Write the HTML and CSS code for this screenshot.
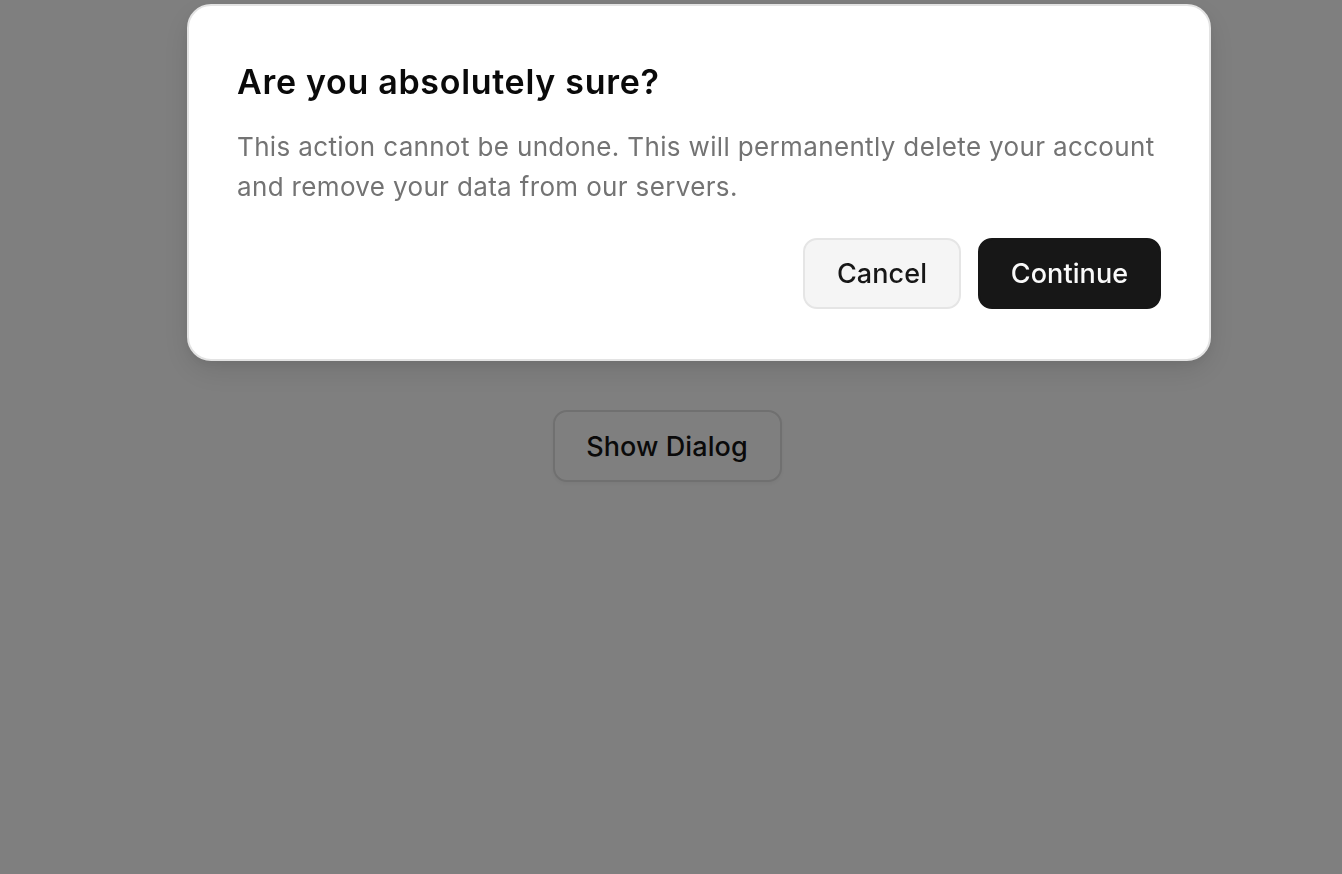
FILE: index.html
```html
<!DOCTYPE html>
<html lang="en">
<head>
<meta charset="utf-8">
<title>Alert Dialog</title>
<link rel="stylesheet" href="styles.css">
</head>
<body>
<main class="page">
  <button class="btn btn-outline">Show Dialog</button>
</main>
<div class="overlay"></div>
<div class="dialog" role="alertdialog" aria-labelledby="dlg-title">
  <h2 id="dlg-title" class="dialog-title">Are you absolutely sure?</h2>
  <p class="dialog-desc">This action cannot be undone. This will permanently delete your account and remove your data from our servers.</p>
  <div class="dialog-footer">
    <button class="btn btn-secondary">Cancel</button>
    <button class="btn btn-primary">Continue</button>
  </div>
</div>
</body>
</html>
```
FILE: styles.css
```css
* { box-sizing: border-box; }
html, body { margin: 0; height: 100%; }
body {
  background: #ffffff;
  font-family: Inter, "Noto Sans", sans-serif;
  color: #0a0a0a;
}
.page {
  display: flex;
  justify-content: center;
  padding-top: 410px;
  padding-right: 8px;
}
.btn {
  font-family: inherit;
  font-size: 27px;
  font-weight: 500;
  height: 71px;
  border-radius: 14px;
  cursor: pointer;
  letter-spacing: 0.1px;
}
.btn-outline {
  width: 229px;
  height: 72px;
  background: #ffffff;
  border: 2px solid #e0e0e0;
  color: #141414;
  box-shadow: 0 2px 4px rgba(0,0,0,0.05);
}
.overlay {
  position: fixed;
  inset: 0;
  background: rgba(0,0,0,0.5);
}
.dialog {
  position: fixed;
  left: 187px;
  top: 4px;
  width: 1024px;
  background: #ffffff;
  border: 2px solid #e3e3e3;
  border-radius: 24px;
  padding: 48px 48px 50px 48px;
  box-shadow: 0 10px 30px rgba(0,0,0,0.1), 0 4px 12px rgba(0,0,0,0.06);
  display: flex;
  flex-direction: column;
}
.dialog-title {
  margin: 0;
  font-size: 34px;
  font-weight: 600;
  line-height: 56px;
  letter-spacing: 0.7px;
  color: #0a0a0a;
}
.dialog-desc {
  margin: 17px 0 0;
  font-size: 26px;
  line-height: 40px;
  letter-spacing: 0.35px;
  color: #737373;
}
.dialog-footer {
  margin-top: 31px;
  display: flex;
  justify-content: flex-end;
  gap: 17px;
}
.btn-secondary {
  width: 158px;
  background: #f5f5f5;
  border: 2px solid #e5e5e5;
  color: #171717;
}
.btn-primary {
  width: 183px;
  background: #171717;
  border: 2px solid #171717;
  color: #fafafa;
}
```
